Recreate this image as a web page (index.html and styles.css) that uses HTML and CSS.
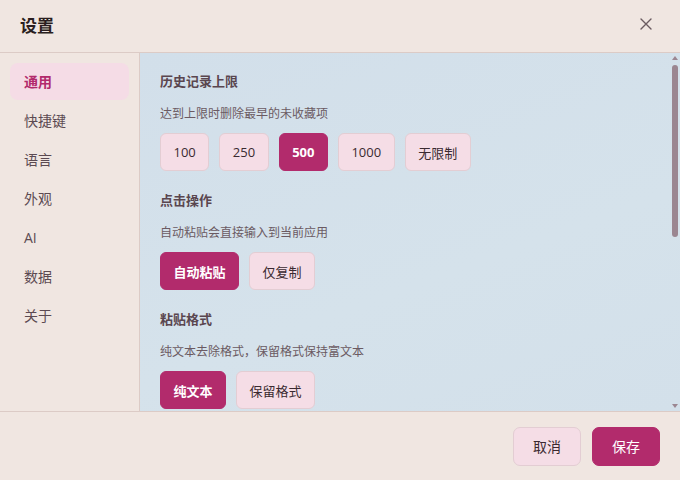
FILE: index.html
```html
<!DOCTYPE html>
<html lang="zh-CN">
<head>
<meta charset="utf-8">
<title>设置</title>
<link rel="stylesheet" href="styles.css">
</head>
<body>
<div class="dialog">
  <header class="dlg-header">
    <h1 class="dlg-title">设置</h1>
    <button class="close-btn" aria-label="关闭">
      <svg width="12" height="12" viewBox="0 0 12 12"><path d="M1 1L11 11M11 1L1 11" stroke="#6b5b60" stroke-width="1.4" stroke-linecap="round"/></svg>
    </button>
  </header>
  <div class="dlg-body">
    <nav class="sidebar">
      <div class="nav-item active">通用</div>
      <div class="nav-item">快捷键</div>
      <div class="nav-item">语言</div>
      <div class="nav-item">外观</div>
      <div class="nav-item">AI</div>
      <div class="nav-item">数据</div>
      <div class="nav-item">关于</div>
    </nav>
    <main class="content">
      <section class="section">
        <h2 class="sec-title">历史记录上限</h2>
        <p class="sec-desc">达到上限时删除最早的未收藏项</p>
        <div class="opts">
          <button class="opt">100</button>
          <button class="opt">250</button>
          <button class="opt selected">500</button>
          <button class="opt">1000</button>
          <button class="opt">无限制</button>
        </div>
      </section>
      <section class="section">
        <h2 class="sec-title">点击操作</h2>
        <p class="sec-desc">自动粘贴会直接输入到当前应用</p>
        <div class="opts">
          <button class="opt selected">自动粘贴</button>
          <button class="opt">仅复制</button>
        </div>
      </section>
      <section class="section">
        <h2 class="sec-title">粘贴格式</h2>
        <p class="sec-desc">纯文本去除格式，保留格式保持富文本</p>
        <div class="opts">
          <button class="opt selected">纯文本</button>
          <button class="opt">保留格式</button>
        </div>
      </section>
    </main>
    <div class="scrollbar" aria-hidden="true">
      <span class="sb-arrow up"></span>
      <div class="sb-track"><div class="sb-thumb"></div></div>
      <span class="sb-arrow down"></span>
    </div>
  </div>
  <footer class="dlg-footer">
    <button class="btn btn-secondary">取消</button>
    <button class="btn btn-primary">保存</button>
  </footer>
</div>
</body>
</html>
```

FILE: styles.css
```css
* { box-sizing: border-box; }
html, body { margin: 0; padding: 0; }
body {
  width: 680px;
  height: 480px;
  overflow: hidden;
  font-family: "Open Sans", "Noto Sans CJK SC", sans-serif;
  background: #f0e6e1;
  color: #3a2a30;
}
button { font-family: inherit; cursor: pointer; }

.dialog {
  display: flex;
  flex-direction: column;
  height: 480px;
  background: #f0e6e1;
}

.dlg-header {
  height: 53px;
  flex: none;
  display: flex;
  align-items: center;
  justify-content: space-between;
  padding: 0 28px 0 20px;
  border-bottom: 1px solid #dccbc6;
}
.dlg-title {
  margin: 0;
  font-size: 17px;
  font-weight: 700;
  color: #2a1e20;
  line-height: 24px;
}
.close-btn {
  border: none;
  background: transparent;
  padding: 0;
  width: 12px;
  height: 12px;
  display: flex;
  margin-top: -4px;
}

.dlg-body {
  position: relative;
  flex: 1;
  display: flex;
  min-height: 0;
}

.sidebar {
  width: 140px;
  flex: none;
  padding: 10px 10px;
  border-right: 1px solid #dccbc6;
  display: flex;
  flex-direction: column;
  gap: 2px;
}
.nav-item {
  height: 37px;
  line-height: 37px;
  padding-left: 14px;
  font-size: 14px;
  color: #5c4a52;
  border-radius: 8px;
}
.nav-item.active {
  background: #f5dce6;
  color: #b22a6c;
  font-weight: 700;
}

.content {
  flex: 1;
  overflow: hidden;
  padding: 18px 20px 0 20px;
  background: linear-gradient(160deg, #d2dfea 0%, #d5e2eb 60%, #d3e0ea 100%);
}

.scrollbar {
  position: absolute;
  top: 0;
  bottom: 0;
  right: 2px;
  width: 6px;
  display: flex;
  flex-direction: column;
  align-items: center;
  padding: 3px 0 3px 0;
}
.sb-arrow {
  flex: none;
  width: 0;
  height: 0;
  border-left: 3px solid transparent;
  border-right: 3px solid transparent;
}
.sb-arrow.up { border-bottom: 4px solid #9b8691; }
.sb-arrow.down { border-top: 4px solid #9b8691; }
.sb-track {
  flex: 1;
  width: 6px;
  padding: 5px 0;
}
.sb-thumb {
  width: 6px;
  height: 172px;
  border-radius: 3px;
  background: #9b8691;
}

.section { margin-bottom: 19px; }
.sec-title {
  margin: 0 0 14px 0;
  font-size: 13px;
  line-height: 20px;
  font-weight: 700;
  color: #5a464f;
}
.sec-desc {
  margin: 0 0 10px 0;
  font-size: 12px;
  line-height: 18px;
  color: #6b5a62;
}
.opts {
  display: flex;
  gap: 10px;
}
.opt {
  height: 38px;
  padding: 0 12.5px;
  font-size: 13px;
  border-radius: 6px;
  border: 1px solid #e3cdd3;
  background: #f5dde6;
  color: #3a2a30;
}
.opt.selected {
  background: #b22b6c;
  border-color: #b22b6c;
  color: #ffffff;
  font-weight: 700;
}

.dlg-footer {
  height: 69px;
  flex: none;
  border-top: 1px solid #dccbc6;
  display: flex;
  align-items: center;
  justify-content: flex-end;
  gap: 11px;
  padding: 0 20px 0 0;
}
.btn {
  height: 39px;
  padding: 0 19px;
  font-size: 14px;
  border-radius: 7px;
  border: 1px solid #e3cdd3;
}
.btn-secondary {
  background: #f5dde6;
  color: #3a2a30;
}
.btn-primary {
  background: #b22b6c;
  border-color: #b22b6c;
  color: #ffffff;
}
```
